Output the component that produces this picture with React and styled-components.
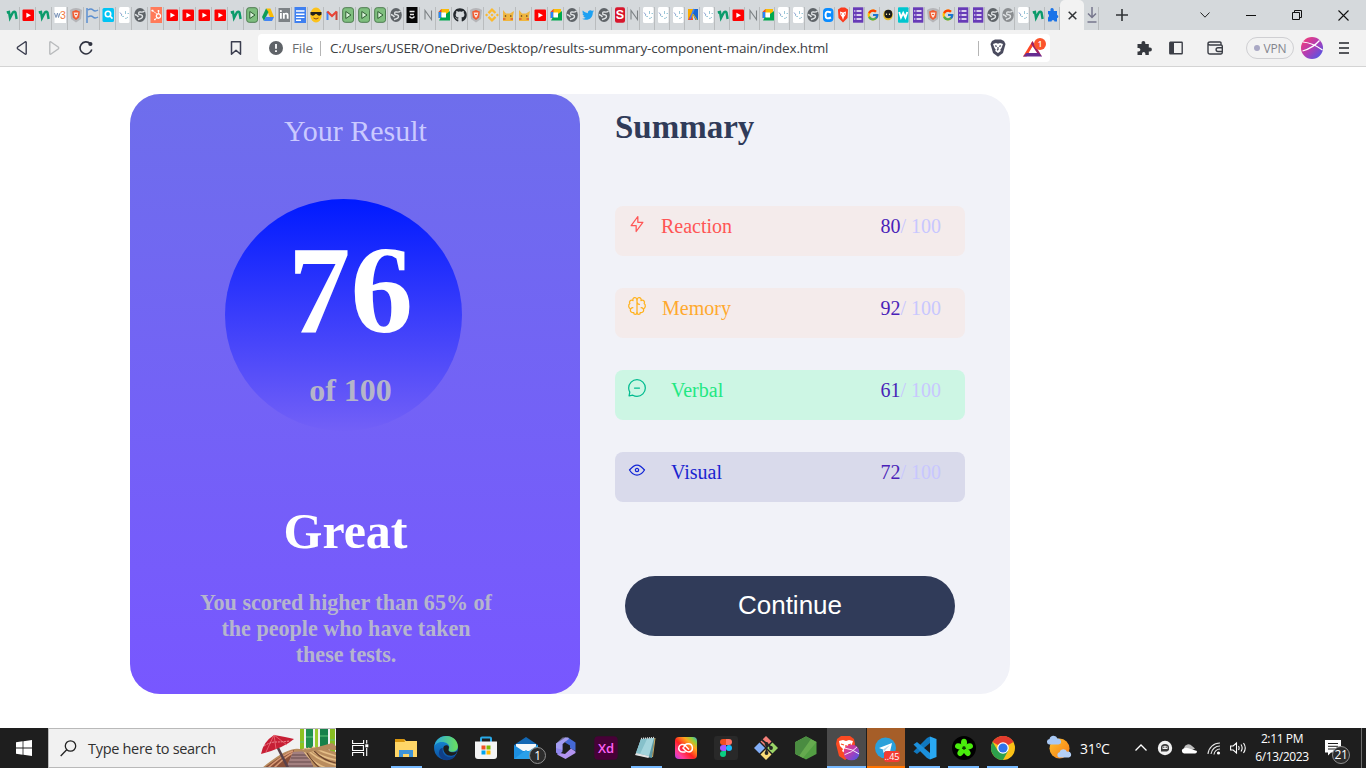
import React from "react";
import styled, { createGlobalStyle } from "styled-components";
import { FcGoogle } from "react-icons/fc";
import { FaGithub, FaTwitter, FaHubspot, FaLinkedinIn } from "react-icons/fa";
import { SiBinance } from "react-icons/si";

const UI = '"Open Sans", "Noto Sans", sans-serif';
const SERIF = '"Liberation Serif", "Times New Roman", serif';

const GlobalStyle = createGlobalStyle`
  * { box-sizing: border-box; }
  html, body { margin: 0; padding: 0; background: #fff; }
  svg { display: block; flex: none; }
`;

const Screen = styled.div`
  width: 1366px;
  height: 768px;
  display: flex;
  flex-direction: column;
  overflow: hidden;
  background: #fff;
  font-family: ${UI};
`;

/* ---------- tab strip ---------- */

const TabStrip = styled.div`
  height: 30px;
  flex: none;
  display: flex;
  background: #d5d9dc;
  padding-left: 4px;
`;

const Tab = styled.div`
  width: ${(p) => p.$w}px;
  height: 30px;
  flex: none;
  display: flex;
  justify-content: center;
  padding-top: 7px;
  overflow: hidden;
  background: linear-gradient(#b9bcbe, #b9bcbe) right bottom / 1px 23px no-repeat;
`;

const ActiveTab = styled.div`
  width: 24px;
  height: 30px;
  flex: none;
  display: flex;
  align-items: center;
  justify-content: center;
  background: #f2f2f2;
  border-radius: 5px 5px 0 0;
`;

const NewTab = styled.div`
  width: 45px;
  display: flex;
  align-items: center;
  justify-content: center;
`;

const WindowControls = styled.div`
  margin-left: auto;
  display: flex;
  align-items: center;
`;

const WindowButton = styled.div`
  width: 46px;
  height: 28px;
  display: flex;
  align-items: center;
  justify-content: center;
`;

const Fav = ({ children }) => (
  <svg width="14" height="16" viewBox="0 0 14 16">{children}</svg>
);

const tinyText = { fontFamily: '"Liberation Sans", sans-serif', textAnchor: "middle" };

const Globe = ({ color }) => (
  <Fav>
    <ellipse cx="7" cy="8" rx="5.800" ry="7" fill={color} />
    <path d="M11.500 4Q10 5.500 7.500 5T6 7.500Q9.500 7.500 9.500 9.500T5 12.500M1.800 7.500Q4 8 5.500 10" fill="none" stroke="#dfe2e4" strokeWidth="1.400" />
  </Fav>
);

const favicons = {
  green: (
    <Fav><path d="M1.800 5.500 4 5 5 11 7.800 5.500Q9.500 4.200 10.500 5.500L11.600 12" fill="none" stroke="#0b9b6b" strokeWidth="2.400" /></Fav>
  ),
  yt: (
    <Fav><rect x="1.500" y="2.500" width="11.500" height="11.500" rx="1" fill="#f00" /><path d="M5.400 5.800 10 8.300 5.400 10.800Z" fill="#fff" /></Fav>
  ),
  w3: (
    <Fav>
      <rect x="1.500" width="11.500" height="16" fill="#fff" />
      <path d="M1.500 6 3 10.500 4.500 6 5.500 10.500 7 6" fill="none" stroke="#7a93b8" strokeWidth="1" />
      <text x="9.800" y="11.500" fontSize="10.500" fill="#f0783c" style={tinyText}>3</text>
    </Fav>
  ),
  braveGrey: (
    <Fav>
      <path d="M1 3Q7-1 13 3L12 12 7 15.500 2 12Z" fill="#b5b5b8" />
      <path d="M3.200 4.500 7 3l3.800 1.500-.6 6L7 13 3.800 10.500Z" fill="#f05a30" />
      <path d="M4.600 5.500h4.800L8.500 9 7 11 5.500 9Z" fill="#fbe3da" />
      <path d="M6 7.500h2" stroke="#f05a30" />
    </Fav>
  ),
  waves: (
    <Fav><path d="M2 16V1M3 3Q6 1 8 3T13 3M3 10Q6 8 8 10T13 10" fill="none" stroke="#5b8fd0" strokeWidth="1.500" /></Fav>
  ),
  search: (
    <Fav><rect x="1.500" y="1" width="11.500" height="14" rx="1.500" fill="#00c4f4" /><circle cx="7" cy="7" r="2.700" fill="none" stroke="#fff" strokeWidth="1.600" /><path d="M9 9l2.500 2.600" stroke="#fff" strokeWidth="1.600" /></Fav>
  ),
  dim: (
    <Fav><rect x="2" width="10.500" height="16" rx="1.500" fill="#fff" /><path d="M4 8Q5 10 7 9.500M8.500 4v3M8 11.500Q10 11.500 11 10M10.500 6.500h1.500" fill="none" stroke="#9cc8d8" strokeWidth="1" /><path d="M3 5.500 5 8" stroke="#7f93c8" strokeWidth=".9" /></Fav>
  ),
  globe: <Globe color="#5f6468" />,
  globeLight: <Globe color="#8a8d90" />,
  hubspot: (
    <Fav><rect x="1.500" width="11.500" height="16" fill="#ff7a59" /><FaHubspot x="1.800" y="2.500" size="11" color="#fff" /></Fav>
  ),
  play: (
    <Fav><rect x="1.700" y=".7" width="10.800" height="14.600" rx="2.500" fill="#7fbf7f" stroke="#4d7c4f" /><path d="M4.800 4.500 10 8 4.800 11.500Z" fill="#d8f2d8" stroke="#2f5c33" /></Fav>
  ),
  drive: (
    <Fav><path d="M5 1.500H9.500L13 10H9Z" fill="#fbbc04" /><path d="M5 1.500 1 10 3 14 7.500 5Z" fill="#0f9d58" /><path d="M4.500 10H13L11 14H3Z" fill="#4285f4" /></Fav>
  ),
  linkedin: (
    <Fav><rect x="1.500" y="1" width="11.500" height="14" fill="#7d8286" /><FaLinkedinIn x="2.200" y="3" size="10" color="#fff" /></Fav>
  ),
  docs: (
    <Fav><rect x="1.500" width="11.500" height="16" fill="#3f80f0" /><path d="M3 4h8.500M3 7.200h8.500M3 10.400h8.500M3 13.300h5" stroke="#fff" strokeWidth="1.400" /></Fav>
  ),
  emoji: (
    <Fav><ellipse cx="7" cy="8" rx="5.700" ry="7.500" fill="#fcc21b" /><path d="M1.500 5h11v2.500Q10 10 7.500 7h-1Q4 10 1.500 7.500Z" fill="#23201d" /><path d="M4.500 11Q7 13 9.500 11" stroke="#8a4b20" fill="none" /></Fav>
  ),
  gmail: (
    <Fav><path d="M2.500 13V4.500" stroke="#4285f4" strokeWidth="2" /><path d="M11.500 13V4.500" stroke="#c5473b" strokeWidth="2" /><path d="M2.300 4.500 7 9l4.700-4.500" stroke="#ea4335" strokeWidth="2.200" fill="none" /></Fav>
  ),
  black: (
    <Fav><rect x="1.500" width="11" height="16" fill="#050505" /><path d="M4.500 4.500h5M5 7.500h4M4.500 9.500q2.500 3 5 0" stroke="#e8e8e8" strokeWidth="1.400" fill="none" /></Fav>
  ),
  n: (
    <Fav><path d="M4 12.500V3.500L10.500 12.500V3.500" fill="none" stroke="#7d8285" strokeWidth="1.100" /></Fav>
  ),
  meet: (
    <Fav><path d="M1.500 5 4.500 2H12v5H5v4H1.500Z" fill="#fbbc04" /><path d="M1.500 5 4.500 2V5Z" fill="#ea4335" /><path d="M1.500 5H4.500v6H1.500Z" fill="#2684fc" /><path d="M4 10h5V7l4-3v9.500H2Z" fill="#00a84f" /><rect x="4.500" y="5.500" width="4.500" height="5" fill="#fff" /></Fav>
  ),
  github: (
    <Fav><FaGithub x="0" y="1" size="14" color="#24292e" /></Fav>
  ),
  binance: (
    <Fav><SiBinance x="0" y="1" size="14" color="#fbb92e" /></Fav>
  ),
  pika: (
    <Fav><path d="M2 3 5 6.500H9L13 4 12 9V14H2Z" fill="#efb640" /><circle cx="4.500" cy="9" r=".8" fill="#4b3520" /><circle cx="9.800" cy="9" r=".8" fill="#4b3520" /><path d="M2 12h2.500M9.500 12H12" stroke="#df5f34" strokeWidth="1.600" /></Fav>
  ),
  twitter: (
    <Fav><FaTwitter x="1" y="2" size="12" color="#1da1f2" /></Fav>
  ),
  s: (
    <Fav><rect x="2" y=".3" width="10" height="15.400" rx="2" fill="#d8162c" /><text x="7" y="12.300" fontSize="12.500" fontWeight="700" fill="#fff" style={tinyText}>S</text></Fav>
  ),
  ads: (
    <Fav><path d="M2 2h5v11H2Z" fill="#f9ab00" /><path d="M7.500 2H12v11H9.500L6 6Z" fill="#1967d2" /><path d="M2 13 5 7l2 6Z" fill="#e8453c" /><path d="M8 2 4 12" stroke="#4285f4" strokeWidth="1.600" /><path d="M7 7l4 6" stroke="#fbbc04" /></Fav>
  ),
  c: (
    <Fav><rect x="2" y="1" width="10.500" height="14" rx="4" fill="#0a8cff" /><path d="M10 5.500Q4.500 3 4.500 8T10 10.500" fill="none" stroke="#fff" strokeWidth="2" /></Fav>
  ),
  braveRed: (
    <Fav><path d="M2 2.500 5 .5h4l3 2L11.500 11 7 15.500 2.500 11Z" fill="#fb3b1e" /><path d="M4 4.500 7 5.500 10 4.500 9.500 8 8 10 7 13 6 10 4.500 8Z" fill="#fff" /><path d="M5 7h1M8 7h1" stroke="#fb3b1e" /></Fav>
  ),
  list: (
    <Fav><rect x="2" y=".3" width="10.300" height="15.400" fill="#673ab7" /><path d="M5.500 4h5M5.500 8h5M5.500 12h5" stroke="#fff" strokeWidth="1.300" /><path d="M3.300 4h1M3.300 8h1M3.300 12h1" stroke="#fff" strokeWidth="1.300" /></Fav>
  ),
  google: (
    <Fav><FcGoogle x=".5" y="1.500" size="13" /></Fav>
  ),
  bee: (
    <Fav><ellipse cx="7" cy="8" rx="4.800" ry="5.300" fill="#e3b92c" /><ellipse cx="7.300" cy="7" rx="4" ry="4.200" fill="#1b1b1b" /><path d="M5.500 6.500v1.500M8.500 6.500v1.500" stroke="#f4e6a0" strokeWidth="1.200" /></Fav>
  ),
  w: (
    <Fav><rect x="2" y=".3" width="10.500" height="15.400" rx="1" fill="#00c6cf" /><path d="M3.200 5 5 10.500 7.200 6 9.400 10.500 11.300 5" fill="none" stroke="#fff" strokeWidth="1.900" /></Fav>
  ),
  puzzle: (
    <Fav><path d="M2 4H4.500Q4 1 6 1T7.800 4H11V8Q12.300 8 12.300 9.500T11 11V14.500H8.500Q8.500 13 7 13T5.500 14.500H2V10.500Q3 10 3 8.500T2 7Z" fill="#1a73e8" /></Fav>
  ),
};

const wideTabs = (
  "green yt green w3 braveGrey waves search dim globe hubspot yt yt yt yt green play drive linkedin docs emoji gmail play " +
  "play play globe black n meet github braveGrey binance pika pika yt meet globe twitter globe s"
).split(" ");
const narrowTabs = (
  "dim dim dim ads dim green yt n meet dim dim globe c braveRed list google bee w list braveGrey google list list globe globeLight dim green puzzle"
).split(" ");

/* ---------- toolbar ---------- */

const Toolbar = styled.div`
  height: 37px;
  flex: none;
  display: flex;
  align-items: center;
  background: #f2f2f2;
  border-bottom: 1px solid #d4d4d4;
  padding: 0 15px 0 14px;
`;

const NavButtons = styled.div`
  display: flex;
  align-items: center;
  gap: 16px;
  width: 214px;
`;

const AddressBar = styled.div`
  width: 792px;
  height: 28px;
  margin-left: 14px;
  padding: 0 3px 0 10px;
  display: flex;
  align-items: center;
  background: #fff;
  border-radius: 4px;
  font-size: 13.500px;
  color: #3c4043;
`;

const Scheme = styled.span`
  margin-left: 8px;
  width: 28px;
  color: #6a6d70;
  white-space: nowrap;
  letter-spacing: -0.1px;
`;

const Divider = styled.span`
  width: 1px;
  height: 15px;
  background: #b5b5b5;
`;

const Url = styled.span`
  margin-left: 9px;
  flex: 1;
  white-space: nowrap;
  letter-spacing: -0.14px;
`;

const Rewards = styled.div`
  position: relative;
  margin-left: 17px;
  width: 24px;
  height: 22px;
  padding-top: 4px;
`;

const RewardBadge = styled.span`
  position: absolute;
  right: 1px;
  top: 1px;
  width: 12px;
  height: 12px;
  border-radius: 6px;
  background: #fb542b;
  color: #fff;
  font-size: 8px;
  font-weight: 600;
  line-height: 12px;
  text-align: center;
`;

const Extensions = styled.div`
  margin-left: auto;
  display: flex;
  align-items: center;
`;

const Vpn = styled.div`
  width: 48px;
  height: 22px;
  margin: 0 7px 0 22px;
  border: 1px solid #cfcfd2;
  border-radius: 11px;
  display: flex;
  align-items: center;
  justify-content: center;
  gap: 4px;
  color: #83858d;
  font-size: 12px;
  letter-spacing: -0.2px;
`;

const VpnDot = styled.span`
  width: 6px;
  height: 6px;
  border-radius: 50%;
  background: #a9a8c4;
`;

/* ---------- page ---------- */

const Page = styled.main`
  flex: 1;
  padding: 27px 0 0 130px;
  font-family: ${SERIF};
`;

const Card = styled.section`
  width: 880px;
  height: 600px;
  display: flex;
  background: #f1f2f8;
  border-radius: 30px;
`;

const ResultPanel = styled.div`
  width: 450px;
  height: 600px;
  flex: none;
  border-radius: 30px;
  background: linear-gradient(#6e6eec, #7857ff);
  display: flex;
  flex-direction: column;
`;

const ResultTitle = styled.div`
  margin: 20px 0 0 154px;
  font-size: 30px;
  line-height: 34px;
  color: #cac9ff;
`;

const ScoreCircle = styled.div`
  width: 237px;
  height: 232px;
  margin: 51px 0 0 95px;
  padding: 20px 0 0 14px;
  border-radius: 50%;
  background: linear-gradient(#001aff, rgba(115, 96, 247, 0.98));
  display: flex;
  flex-direction: column;
  align-items: center;
  font-weight: 700;
`;

const Score = styled.div`
  font-size: 125px;
  line-height: 142px;
  color: #fff;
`;

const ScoreOf = styled.div`
  margin-top: 11px;
  font-size: 32px;
  line-height: 37px;
  color: #b5b5c9;
`;

const Verdict = styled.h1`
  margin: 72px 0 0 153.5px;
  font-size: 50px;
  line-height: 57px;
  font-weight: 700;
  color: #fff;
`;

const Explanation = styled.p`
  margin: 30px 0 0 66px;
  width: 300px;
  font-size: 22.100px;
  line-height: 26px;
  font-weight: 700;
  text-align: center;
  color: #b5b5cd;
  white-space: nowrap;
`;

const SummaryPanel = styled.div`
  padding: 14px 0 0 35px;
`;

const SummaryTitle = styled.h2`
  margin: 0 0 60px;
  font-size: 33px;
  line-height: 38px;
  font-weight: 700;
  color: #303b59;
`;

const Stats = styled.div`
  display: flex;
  flex-direction: column;
  gap: 32px;
`;

const Stat = styled.div`
  width: 350px;
  height: 50px;
  padding: 8px 24px 0 12px;
  border-radius: 8px;
  display: flex;
  align-items: flex-start;
  background: ${(p) => p.$bg};
  color: ${(p) => p.$color};
  font-size: 20px;
  line-height: 25px;
`;

const StatName = styled.span`
  flex: 1;
  margin-left: ${(p) => p.$gap}px;
`;

const StatValue = styled.span`
  color: #4a1fb8;
`;

const StatTotal = styled.span`
  color: #c8c7ff;
`;

const ContinueButton = styled.button`
  display: block;
  width: 330px;
  height: 60px;
  margin: 74px 0 0 10px;
  padding: 0 0 1px;
  border: 0;
  border-radius: 30px;
  background: #303b59;
  color: #fff;
  font: 26px "Liberation Sans", Arial, sans-serif;
`;

const StatIcon = ({ children }) => (
  <svg width="20" height="20" viewBox="0 0 20 20" fill="none" strokeWidth="1.25" strokeLinecap="round" strokeLinejoin="round">
    {children}
  </svg>
);

const stats = [
  {
    name: "Reaction", value: 80, bg: "#f4ebeb", color: "#ff5555", gap: 14,
    icon: <StatIcon><path stroke="#ff5555" d="M10.833 8.333V2.500l-6.666 9.167h5V17.500l6.666-9.167h-5Z" /></StatIcon>,
  },
  {
    name: "Memory", value: 92, bg: "#f4ebeb", color: "#ffa92e", gap: 15,
    icon: (
      <StatIcon>
        <g stroke="#ffb21e">
          <path d="M5.833 11.667a2.500 2.500 0 1 0 .834 4.858" />
          <path d="M3.553 13.004a3.333 3.333 0 0 1-.728-5.530m.025-.067a2.083 2.083 0 0 1 2.983-2.824m.199.054A2.083 2.083 0 1 1 10 3.750v12.917a1.667 1.667 0 0 1-3.333 0M10 5.833a2.500 2.500 0 0 0 2.500 2.500m1.667 3.334a2.500 2.500 0 1 1-.834 4.858" />
          <path d="M16.447 13.004a3.334 3.334 0 0 0 .728-5.530m-.025-.067a2.083 2.083 0 0 0-2.983-2.824M10 3.750a2.083 2.083 0 1 1 3.967.887M10 16.667a1.667 1.667 0 0 0 3.333 0" />
        </g>
      </StatIcon>
    ),
  },
  {
    name: "Verbal", value: 61, bg: "#cdf6e4", color: "#1fe882", gap: 24,
    icon: <StatIcon><path stroke="#00bb8f" d="M7.500 10h5M10 18.333A8.333 8.333 0 1 0 1.667 10c0 1.518.406 2.942 1.115 4.167l-.699 3.750 3.750-.699A8.295 8.295 0 0 0 10 18.333Z" /></StatIcon>,
  },
  {
    name: "Visual", value: 72, bg: "#d9daeb", color: "#1b25d0", gap: 24,
    icon: (
      <StatIcon>
        <path stroke="#1125d6" d="M10 11.667a1.667 1.667 0 1 0 0-3.334 1.667 1.667 0 0 0 0 3.334Z" />
        <path stroke="#1125d6" d="M17.500 10c-1.574 2.492-4.402 5-7.500 5s-5.926-2.508-7.500-5C4.416 7.632 6.660 5 10 5s5.584 2.632 7.500 5Z" />
      </StatIcon>
    ),
  },
];

/* ---------- taskbar ---------- */

const Taskbar = styled.footer`
  height: 40px;
  flex: none;
  display: flex;
  align-items: stretch;
  background: #1e1e1e;
  color: #fff;
`;

const StartButton = styled.div`
  width: 48px;
  display: flex;
  align-items: center;
  justify-content: center;
`;

const SearchBox = styled.div`
  width: 288px;
  display: flex;
  align-items: center;
  background: #f1f1f1;
  border: 1px solid #b9b9b9;
  border-right: 0;
  padding-left: 11px;
  font-size: 14.500px;
  letter-spacing: -0.3px;
  color: #303030;
  overflow: hidden;
`;

const SearchHint = styled.span`
  flex: 1;
  margin-left: 11px;
  white-space: nowrap;
`;

const TaskView = styled.div`
  width: 50px;
  padding-right: 1px;
  display: flex;
  align-items: center;
  justify-content: center;
`;

const AppButton = styled.div`
  position: relative;
  width: ${(p) => p.$w || 40}px;
  display: flex;
  align-items: center;
  justify-content: center;
  background: ${(p) => p.$bg || "transparent"};
  ${(p) => p.$line && `
    background-image: linear-gradient(${p.$line}, ${p.$line});
    background-size: ${p.$bg ? "100%" : "31px"} 2px;
    background-position: center bottom;
    background-repeat: no-repeat;
  `}
  ${(p) => p.$bg && "margin-left: 1px;"}
`;

const CountBadge = styled.span`
  position: absolute;
  left: ${(p) => p.$x}px;
  top: ${(p) => p.$y}px;
  width: ${(p) => p.$s || 17}px;
  height: ${(p) => p.$s || 17}px;
  border: 1px solid #8f8f8f;
  border-radius: 50%;
  background: #2c2c2c;
  font-size: 12px;
  line-height: 15px;
  letter-spacing: -0.3px;
  text-align: center;
`;

const RedBadge = styled.span`
  position: absolute;
  left: 17px;
  top: 23px;
  width: 16px;
  height: 11px;
  border-radius: 3px;
  background: #f23c34;
  font-size: 9px;
  line-height: 11px;
  text-align: center;
`;

const Tray = styled.div`
  margin-left: auto;
  width: 320px;
  display: flex;
  align-items: center;
  font-size: 12px;
`;

const Temperature = styled.span`
  width: 53px;
  margin-left: 8px;
  font-size: 14px;
  letter-spacing: -0.3px;
`;

const TrayIcons = styled.div`
  display: flex;
  align-items: center;
  gap: 8px;
`;

const Clock = styled.div`
  width: 62px;
  margin-left: 4px;
  font-size: 12px;
  line-height: 18px;
  text-align: center;
  letter-spacing: -0.38px;
  white-space: nowrap;
`;

const Notifications = styled.div`
  position: relative;
  width: 30px;
  height: 40px;
  margin-left: 12px;
  padding-top: 12px;
`;

const ShowDesktop = styled.div`
  margin-left: auto;
  width: 5px;
  height: 40px;
  border-left: 1px solid #6d6d6d;
`;

const Bamboo = () => (
  <svg width="76" height="40" viewBox="0 0 76 40">
    <rect x="40" width="4" height="24" fill="#8dc21f" />
    <rect x="46" width="7" height="24" fill="#1f8f4e" />
    <rect x="55" width="3" height="24" fill="#9ccc2c" />
    <rect x="60" width="8" height="30" fill="#16814a" />
    <rect x="70" width="5" height="26" fill="#86bd22" />
    <path d="M46 9h7M60 8h8M60 19h8M40 14h4M70 12h5" stroke="#5fc47a" />
    <path d="M2 40Q28 18 40 21L58 19 76 24V40Z" fill="#b98c5e" />
    <path d="M4 40Q26 24 34 22L29 40Z" fill="#8a4f38" />
    <path d="M8 40Q24 26 33 23M14 40Q25 29 33 25" stroke="#d89a75" strokeWidth="1.500" fill="none" />
    <path d="M33 24 46 23 54 40H26Z" fill="#a38080" />
    <path d="M32 27h16M31 30h18M29 34h22M28 38h25" stroke="#64494b" />
    <path d="M43 21Q50 34 66 40M46 20Q56 32 76 37M48 20Q60 29 76 32M52 19Q64 25 76 28" stroke="#e4bd87" strokeWidth="1.600" fill="none" />
    <path d="M45 22Q52 34 60 40M54 23Q64 33 76 35" stroke="#6b432c" strokeWidth="1.200" fill="none" />
    <path d="M36 21Q46 23 58 19L72 15 76 18V22Q60 21 47 25Z" fill="#b48a5c" />
    <path d="M17 18 28 40" stroke="#594149" strokeWidth="2.600" />
    <path d="M1 26Q3 14 14 7 26 9 34 11 24 20 1 26Z" fill="#c71f35" />
    <path d="M14 7 6 24M14 7 16 21M14 7 27 17" stroke="#ee6d78" strokeWidth=".8" />
    <path d="M4 18Q10 14 16 14T30 13" stroke="#f0909a" strokeDasharray="2 1" fill="none" />
  </svg>
);

const Planet = ({ size }) => (
  <svg width={size} height={size} viewBox="0 0 22 22">
    <defs>
      <linearGradient id="planet" x1="0" y1="0" x2="1" y2="1">
        <stop offset="0" stopColor="#ff3d6b" />
        <stop offset=".5" stopColor="#b13cb4" />
        <stop offset="1" stopColor="#3b5bf0" />
      </linearGradient>
    </defs>
    <circle cx="11" cy="11" r="11" fill="url(#planet)" />
    <path d="M2 5Q12 6 21.500 13M1.500 14Q12 11 18.500 3.500" fill="none" stroke="#fff" strokeWidth="1.200" />
  </svg>
);

const Explorer = () => (
  <svg width="24" height="24" viewBox="0 0 24 24">
    <path d="M1 3h9l2 2h11v16H1Z" fill="#ffd667" />
    <path d="M1 3h9l1 3H1Z" fill="#d9960d" />
    <path d="M5 14h14v7h-4v-3H9v3H5Z" fill="#3e94d8" />
  </svg>
);

const Edge = () => (
  <svg width="26" height="26" viewBox="0 0 24 24">
    <defs>
      <linearGradient id="edgeTop"><stop offset="0" stopColor="#2aa9df" /><stop offset="1" stopColor="#6be05b" /></linearGradient>
      <linearGradient id="edgeLow" x1="0" y1="0" x2="0" y2="1"><stop offset="0" stopColor="#1790dc" /><stop offset="1" stopColor="#0c4fa0" /></linearGradient>
    </defs>
    <circle cx="12" cy="12" r="11" fill="url(#edgeLow)" />
    <path d="M1.200 11C2 4.500 7 1 12.500 1 19 1 23 6 23 10.500c0 3-2.500 5-5.500 5-2 0-3.500-.8-3.500-1.500s1-1.200 1-3C15 8.500 12 6.500 8.500 6.500 5 6.500 2 8 1.200 11Z" fill="url(#edgeTop)" />
    <path d="M9 12c-1 5 3 8.500 7 8.500 2 0 4-.8 5-1.500-3 5-12 6.500-15 0C4.500 15 6.500 12 9 12Z" fill="#0f3f88" />
    <path d="M9.500 12c0-2 2-3 3.500-2.500 1.500.5 2 1.500 1.500 3-.8 2.500 1 3.500 4 3.500 1.500 0 3-.5 4-1.500-1 4-5 5-7.500 4.500-3-.5-5.500-3.500-5.500-7Z" fill="#1e1e1e" />
  </svg>
);

const Store = () => (
  <svg width="24" height="24" viewBox="0 0 24 24">
    <path d="M7 6V2.500Q7 1.500 8 1.500h8q1 0 1 1V6" fill="none" stroke="#29a9e8" strokeWidth="2" />
    <path d="M1 5.500h22V20q0 3-3 3H4q-3 0-3-3Z" fill="#f4f4f4" />
    <path d="M7.500 9.500h4v4h-4Z" fill="#f25022" /><path d="M12.500 9.500h4v4h-4Z" fill="#7fba00" />
    <path d="M7.500 14.500h4v4h-4Z" fill="#00a4ef" /><path d="M12.500 14.500h4v4h-4Z" fill="#ffb900" />
  </svg>
);

const Mail = () => (
  <svg width="24" height="24" viewBox="0 0 24 24">
    <path d="M0 9 12 1l12 8v14H0Z" fill="#1267b4" />
    <path d="M2 8h20v7H2Z" fill="#f5f8fa" />
    <path d="M0 9 12 17 0 23Z" fill="#1d8fe0" /><path d="M24 9 12 17 24 23Z" fill="#35b2f4" />
    <path d="M0 23 12 14 24 23Z" fill="#2aa0ea" />
  </svg>
);

const M365 = () => (
  <svg width="22" height="24" viewBox="0 0 22 24">
    <path d="M13 1.500 20.500 6.500V15L15 12V9.500L10 6.500Z" fill="#4468d4" />
    <path d="M20.500 15.500V17L10.500 23 2 18.500 5 17 10 18 16 12.500Z" fill="#b393f0" />
    <path d="M1 7.500 10.500 1.500 14 2.500 7.500 8V15.500L4 19 1 16.500Z" fill="#8f86ee" />
    <path d="M7.500 1.500 13 1 14 3 7.500 8V14L1 12V7.500Z" fill="#b9b4f5" opacity=".5" />
  </svg>
);

const Xd = () => (
  <svg width="24" height="24" viewBox="0 0 24 24">
    <rect x=".3" y=".3" width="23.400" height="23.400" rx="4" fill="#470137" />
    <text x="12" y="16.500" fontSize="13" fontWeight="600" fill="#ff61f6" style={{ fontFamily: UI, textAnchor: "middle" }}>Xd</text>
  </svg>
);

const Notepad = () => (
  <svg width="24" height="24" viewBox="0 0 24 24">
    <path d="M7 3 21 2 18 22 2 19Z" fill="#5d99a5" />
    <path d="M7 3 20 2 15 20 2 17Z" fill="#a3d4dc" />
    <path d="M7 3 13 3 6 18 2 17Z" fill="#86c0ca" />
    <path d="M21 2 18.500 21" stroke="#c6a860" /><path d="M7 2.500 21 1.500" stroke="#dadada" strokeWidth="1.500" strokeDasharray="1 1" />
    <path d="M2 17 15 20l-.5 2L1 19Z" fill="#e4e4e4" />
  </svg>
);

const CreativeCloud = () => (
  <svg width="22" height="22" viewBox="0 0 22 22">
    <defs>
      <linearGradient id="cc" x1="0" y1="1" x2="1" y2="0">
        <stop offset="0" stopColor="#b53cf0" /><stop offset=".2" stopColor="#ff3d9a" /><stop offset=".45" stopColor="#ff2222" />
        <stop offset=".7" stopColor="#ffa51c" /><stop offset=".85" stopColor="#8fd13c" /><stop offset="1" stopColor="#32a5e8" />
      </linearGradient>
    </defs>
    <rect width="22" height="22" rx="4" fill="url(#cc)" />
    <path d="M10.500 15H7.500a3.800 3.800 0 1 1 2.700-6.500l3.800 4M9 10.500a4.200 4.200 0 1 1 5 4.500q-2 0-3.500-1.500l-3-3" fill="none" stroke="#fff" strokeWidth="1.500" />
  </svg>
);

const Figma = () => (
  <svg width="24" height="24" viewBox="0 0 24 24">
    <rect width="24" height="24" rx="3" fill="#292929" />
    <path d="M12 3H9a3 3 0 0 0 0 6h3Z" fill="#f24e1e" /><path d="M12 3h3a3 3 0 0 1 0 6h-3Z" fill="#ff7262" />
    <path d="M12 9H9a3 3 0 0 0 0 6h3Z" fill="#a259ff" /><circle cx="15" cy="12" r="3" fill="#1abcfe" />
    <path d="M12 15H9a3 3 0 1 0 3 3Z" fill="#0acf83" />
  </svg>
);

const Git = () => (
  <svg width="24" height="24" viewBox="0 0 24 24">
    <path d="M12 0 17.500 5.500 12 11 6.500 5.500Z" fill="#f47f78" /><path d="M18.500 6.500l5.500 5.500-5.500 5.500-5.500-5.500Z" fill="#9bd467" />
    <path d="M5.500 6.500l5.500 5.500-5.500 5.500L0 12Z" fill="#82aef8" /><path d="M12 13l5.500 5.500L12 24l-5.500-5.500Z" fill="#fbdc78" />
    <path d="M7 3l6 5 5 4M12.500 8v9" fill="none" stroke="#252525" strokeWidth="1.800" />
    <circle cx="12.500" cy="8" r="1.900" fill="#252525" /><circle cx="17" cy="12" r="1.900" fill="#252525" /><circle cx="12.500" cy="17" r="1.900" fill="#252525" />
  </svg>
);

const Node = () => (
  <svg width="22" height="24" viewBox="0 0 22 24">
    <path d="M11 .5 21.500 6v12L11 23.500.5 18V6Z" fill="#539e43" />
    <path d="M11 .5 21.500 6 8 22 .5 18V6Z" fill="#66aa4f" /><path d="M11 .5 16 3 4 20 .5 18V6Z" fill="#4a8c41" />
  </svg>
);

const BraveApp = () => (
  <svg width="26" height="26" viewBox="0 0 26 26">
    <path d="M3 4 7 1h9l4 3 1 5-3 11-7 5-6-4L2 9Z" fill="#fb4a22" />
    <path d="M5 6l4-1 3 1 3-1 4 1-2 6-2 2 1 2-4 3-4-3 1-2-3-3Z" fill="#fff" />
    <path d="M7 9l3 1M17 9l-3 1M12 10v4l-2 1" stroke="#fb4a22" strokeWidth="1.300" fill="none" />
    <g transform="translate(9.500 9.500)"><Planet size={16} /></g>
  </svg>
);

const Telegram = () => (
  <svg width="22" height="24" viewBox="0 0 22 24">
    <circle cx="10.500" cy="12" r="10.500" fill="#2ba0da" />
    <path d="M4 12 17 7l-2.500 11-4-3-2 2-.5-3.500Z" fill="#fff" /><path d="M8 13.500 15 9l-5.500 6Z" fill="#b5d6ea" />
  </svg>
);

const VsCode = () => (
  <svg width="24" height="24" viewBox="0 0 24 24">
    <path d="M17 .5 23.500 3v18L17 23.500Z" fill="#29a8f2" />
    <path d="M17 .5V7L4 18 .5 15.500 14 2Z" fill="#1078c0" /><path d="M17 23.500V17L4 6 .5 8.500 14 22Z" fill="#1c90dc" />
  </svg>
);

const Icq = () => (
  <svg width="24" height="24" viewBox="0 0 24 24">
    <circle cx="12" cy="12" r="12" fill="#000" />
    {[0, 72, 144, 216, 288].map((a) => (
      <ellipse key={a} cx="12" cy="6.700" rx="3" ry="4" fill="#49ec0c" transform={`rotate(${a} 12 12)`} />
    ))}
    <circle cx="12" cy="12" r="1.400" fill="#0a3d00" />
  </svg>
);

const Chrome = () => (
  <svg width="24" height="24" viewBox="0 0 24 24">
    <circle cx="12" cy="12" r="12" fill="#fbc116" />
    <path d="M12 12 1.600 6A12 12 0 0 1 22.400 6Z" fill="#e33b2e" /><path d="M12 6H22.400A12 12 0 0 0 12 0Z" fill="#e33b2e" />
    <path d="M1.600 6A12 12 0 0 0 12 24L17 15 7 15Z" fill="#2da14c" />
    <circle cx="12" cy="12" r="5.800" fill="#fff" /><circle cx="12" cy="12" r="4.600" fill="#2f74ea" />
  </svg>
);

const Weather = () => (
  <svg width="26" height="26" viewBox="0 0 26 26">
    <defs><linearGradient id="sun" x1="0" y1="0" x2="1" y2="1"><stop offset="0" stopColor="#ffc12c" /><stop offset="1" stopColor="#f57a16" /></linearGradient></defs>
    <circle cx="13.500" cy="13.500" r="10" fill="url(#sun)" />
    <path d="M3 9.500a2.800 2.800 0 0 1 .5-5.500 4.200 4.200 0 0 1 8-.5 3 3 0 0 1 1 6Z" fill="#a8c8f4" />
    <path d="M13 22.500a2.800 2.800 0 0 1 .5-5.300 4 4 0 0 1 7.500-.5 3 3 0 0 1 2 5.800Z" fill="#b5d0f6" />
  </svg>
);

export default function App() {
  return (
    <Screen>
      <GlobalStyle />
      <TabStrip>
        {wideTabs.map((t, i) => <Tab key={i} $w={16}>{favicons[t]}</Tab>)}
        <Tab $w={12}>{favicons.n}</Tab>
        {narrowTabs.map((t, i) => <Tab key={i} $w={15}>{favicons[t]}</Tab>)}
        <ActiveTab>
          <svg width="9" height="9" viewBox="0 0 9 9"><path d="M.7.700l7.600 7.600M8.300.7.700 8.300" stroke="#303336" strokeWidth="1.500" /></svg>
        </ActiveTab>
        <Tab $w={15}>
          <svg width="12" height="16" viewBox="0 0 12 16"><path d="M6 0v10.500M2 6.500l4 4 4-4M1.500 15h9" fill="none" stroke="#76768c" strokeWidth="1.500" /></svg>
        </Tab>
        <NewTab>
          <svg width="12" height="12" viewBox="0 0 12 12"><path d="M6 0v12M0 6h12" stroke="#303336" strokeWidth="1.600" /></svg>
        </NewTab>
        <WindowControls>
          <WindowButton><svg width="10" height="6" viewBox="0 0 10 6"><path d="M.5.5 5 5.200 9.500.5" fill="none" stroke="#222" /></svg></WindowButton>
          <WindowButton><svg width="10" height="1" viewBox="0 0 10 1"><rect width="10" height="1" fill="#111" /></svg></WindowButton>
          <WindowButton><svg width="10" height="10" viewBox="0 0 10 10"><path d="M.5 2.500h7v7h-7ZM2.500 2.500v-2h7v7h-2" fill="none" stroke="#111" /></svg></WindowButton>
          <WindowButton><svg width="11" height="11" viewBox="0 0 11 11"><path d="M.5.5l10 10M10.500.5l-10 10" stroke="#111" strokeWidth="1.100" /></svg></WindowButton>
        </WindowControls>
      </TabStrip>

      <Toolbar>
        <NavButtons>
          <svg width="16" height="16" viewBox="0 0 16 16"><path d="M12.200 2.200v11.600q-.5.700-1.200.2L3.500 8.700q-.5-.7 0-1.400L11 2q.8-.4 1.200.2Z" fill="none" stroke="#3b3e4f" strokeWidth="1.400" /></svg>
          <svg width="16" height="16" viewBox="0 0 16 16"><path d="M3.800 2.200v11.600q.5.700 1.200.2l7.500-5.300q.5-.7 0-1.400L5 2q-.8-.4-1.200.2Z" fill="none" stroke="#b9bbbd" strokeWidth="1.400" /></svg>
          <svg width="16" height="16" viewBox="0 0 16 16"><path d="M13.800 9.500A6 6 0 1 1 12.300 3.700" fill="none" stroke="#303340" strokeWidth="1.600" /><circle cx="12.400" cy="4" r="2.100" fill="#303340" /></svg>
        </NavButtons>
        <svg width="16" height="16" viewBox="0 0 16 16"><path d="M3.500 1.700h9v12.500L8 10.300l-4.500 3.900Z" fill="none" stroke="#3b3e4f" strokeWidth="1.500" strokeLinejoin="round" /></svg>
        <AddressBar>
          <svg width="16" height="16" viewBox="0 0 16 16"><circle cx="8" cy="8" r="7" fill="#5f6368" /><path d="M8 4v4.800M8 10.300v1.800" stroke="#fff" strokeWidth="1.800" /></svg>
          <Scheme>File</Scheme>
          <Divider />
          <Url>C:/Users/USER/OneDrive/Desktop/results-summary-component-main/index.html</Url>
          <Divider />
          <svg width="16" height="18" viewBox="0 0 16 18" style={{ marginLeft: 11 }}>
            <path d="M2 2 5 .5h6L14 2l1.500 3L13 14l-5 3.700L3 14 .5 5Z" fill="#4a4b5e" />
            <path d="M3 5l3-1 2 .7L10 4l3 1-1.500 4-1.200 1.500.5 1.500L8 14l-2.800-2 .5-1.500L4.500 9Z" fill="#fff" />
            <path d="M5 6.800l1.800.6M11 6.800l-1.800.6M8 8v2.500l-1 .7" stroke="#4a4b5e" strokeWidth="1.200" fill="none" />
          </svg>
          <Rewards>
            <svg width="19" height="16" viewBox="0 0 19 16">
              <path d="M9.500 0 0 15.500h3.600L9.500 5.500Z" fill="#ff4724" /><path d="M9.500 0 19 15.500 15.500 14 8 3Z" fill="#9e1f63" />
              <path d="M0 15.500 3.500 12h12L19 15.500Z" fill="#662d91" /><path d="M9.500 6 13 12H6Z" fill="#fff" />
            </svg>
            <RewardBadge>1</RewardBadge>
          </Rewards>
        </AddressBar>
        <Extensions>
          <svg width="16" height="16" viewBox="0 0 16 16"><path d="M1.500 4h4V2.800a1.900 1.900 0 0 1 3.800 0V4h3.500v3.600H14a1.900 1.900 0 0 1 0 3.800h-1.200V15H9.400v-1.200a1.700 1.700 0 0 0-3.400 0V15H1.500v-3.600h1.200a1.700 1.700 0 0 0 0-3.400H1.500Z" fill="#35383e" /></svg>
          <svg width="14" height="14" viewBox="0 0 14 14" style={{ marginLeft: 17 }}><rect x=".8" y="1.300" width="12.400" height="11.400" rx=".5" fill="none" stroke="#3b3e46" strokeWidth="1.400" /><path d="M1 1.500h4v11H1Z" fill="#3b3e46" /></svg>
          <svg width="17" height="16" viewBox="0 0 17 16" style={{ marginLeft: 24 }}><path d="M14 5V3q0-1-1-1H3Q1 2 1 3.500T3 5h11q1.300 0 1.300 1.300v6Q15.300 14 14 14H3q-2 0-2-2V3.500M15 7.700h-4a1.900 1.900 0 0 0 0 3.800h4" fill="none" stroke="#3b3e46" strokeWidth="1.400" /></svg>
          <Vpn><VpnDot />VPN</Vpn>
          <Planet size={22} />
          <svg width="10" height="14" viewBox="0 0 10 14" style={{ marginLeft: 16, marginRight: 2 }}><path d="M0 2h10M0 7h10M0 12h10" stroke="#55575b" strokeWidth="2" /></svg>
        </Extensions>
      </Toolbar>

      <Page>
        <Card>
          <ResultPanel>
            <ResultTitle>Your Result</ResultTitle>
            <ScoreCircle>
              <Score>76</Score>
              <ScoreOf>of 100</ScoreOf>
            </ScoreCircle>
            <Verdict>Great</Verdict>
            <Explanation>
              You scored higher than 65% of<br />the people who have taken<br />these tests.
            </Explanation>
          </ResultPanel>
          <SummaryPanel>
            <SummaryTitle>Summary</SummaryTitle>
            <Stats>
              {stats.map((s) => (
                <Stat key={s.name} $bg={s.bg} $color={s.color}>
                  {s.icon}
                  <StatName $gap={s.gap}>{s.name}</StatName>
                  <StatValue>{s.value}</StatValue>
                  <StatTotal>/ 100</StatTotal>
                </Stat>
              ))}
            </Stats>
            <ContinueButton>Continue</ContinueButton>
          </SummaryPanel>
        </Card>
      </Page>

      <Taskbar>
        <StartButton>
          <svg width="16" height="16" viewBox="0 0 16 16"><path d="M0 2.200 6.600 1.300V7.600H0ZM7.400 1.200 16 0V7.600H7.400ZM0 8.400H6.600V14.700L0 13.800ZM7.400 8.400H16V16L7.400 14.800Z" fill="#fff" /></svg>
        </StartButton>
        <SearchBox>
          <svg width="17" height="17" viewBox="0 0 17 17"><circle cx="10.500" cy="6" r="5.200" fill="none" stroke="#222" strokeWidth="1.300" /><path d="M6.700 9.800.7 16" stroke="#222" strokeWidth="1.300" /></svg>
          <SearchHint>Type here to search</SearchHint>
          <Bamboo />
        </SearchBox>
        <TaskView>
          <svg width="17" height="16" viewBox="0 0 17 16"><path d="M.6 0v3.500h11V0M.6 16v-3.500h11V16M.6 5.500h10.800v5H.6ZM14.700 0v3.500M14.700 8v8" fill="none" stroke="#fff" strokeWidth="1.100" /><rect x="13.300" y="4.300" width="3" height="3" fill="#fff" /></svg>
        </TaskView>
        <AppButton $line="#76b9ff"><Explorer /></AppButton>
        <AppButton><Edge /></AppButton>
        <AppButton><Store /></AppButton>
        <AppButton><Mail /><CountBadge $x={23} $y={19}>1</CountBadge></AppButton>
        <AppButton><M365 /></AppButton>
        <AppButton><Xd /></AppButton>
        <AppButton $line="#76b9ff"><Notepad /></AppButton>
        <AppButton><CreativeCloud /></AppButton>
        <AppButton><Figma /></AppButton>
        <AppButton><Git /></AppButton>
        <AppButton><Node /></AppButton>
        <AppButton $w={39} $bg="#4b4b4b" $line="#76b9ff"><BraveApp /></AppButton>
        <AppButton $w={38} $bg="#a65e28" $line="#ff7400"><Telegram /><RedBadge>..45</RedBadge></AppButton>
        <AppButton $w={39} $line="#76b9ff"><VsCode /></AppButton>
        <AppButton $w={39} $line="#76b9ff"><Icq /></AppButton>
        <AppButton $w={39} $line="#76b9ff"><Chrome /></AppButton>
        <Tray>
          <Weather />
          <Temperature>31°C</Temperature>
          <TrayIcons>
            <svg width="16" height="16" viewBox="0 0 16 16"><path d="M2.500 10.500 8 5l5.500 5.500" fill="none" stroke="#fff" strokeWidth="1.300" /></svg>
            <svg width="16" height="16" viewBox="0 0 16 16"><circle cx="8" cy="8" r="7.200" fill="#f0f0f0" /><path d="M4 11.500V7.500q0-3.500 4-3.500t4 3.500v2.500L10 11.500Z" fill="#3a3a3a" /><path d="M5.500 6.500Q8 5 10.500 6.500V9H5.500Z" fill="#f0f0f0" /><path d="M6.800 6.500v1.500M9.200 6.500v1.500" stroke="#3a3a3a" strokeWidth="1" /></svg>
            <svg width="17" height="16" viewBox="0 0 17 16"><path d="M3 8a4.500 4.500 0 0 1 8-2l3 2.500-9 4.500Z" fill="#bdbdbd" /><path d="M3 13.500a2.700 2.700 0 0 1 0-5.300q2-1 4.500 0L16 11q0 2.500-2 2.500Z" fill="#fff" /></svg>
            <svg width="16" height="16" viewBox="0 0 16 16"><path d="M2 14A12 12 0 0 1 14 3M5 14A9 9 0 0 1 14 6M8 14.500A6 6 0 0 1 14 9" fill="none" stroke="#e5e5e5" strokeWidth="1.100" /><circle cx="12.500" cy="13" r="1.600" fill="#fff" /></svg>
            <svg width="17" height="16" viewBox="0 0 17 16"><path d="M.6 6h2.600L6.500 3v10L3.200 10H.6ZM8.500 6q1.200 2 0 4M11 4.500q2.300 3.500 0 7M13.500 3q3.500 5 0 10" fill="none" stroke="#fff" strokeWidth="1.100" /></svg>
          </TrayIcons>
          <Clock>2:11 PM<br />6/13/2023</Clock>
          <Notifications>
            <svg width="16" height="16" viewBox="0 0 16 16"><path d="M0 0h16v12.500H6L3 15.500V12.500H0Z" fill="#fff" /><path d="M3 3.500h10M3 6.300h10M3 9h7" stroke="#1e1e1e" /></svg>
            <CountBadge $x={7} $y={18} $s={18}>21</CountBadge>
          </Notifications>
          <ShowDesktop />
        </Tray>
      </Taskbar>
    </Screen>
  );
}
